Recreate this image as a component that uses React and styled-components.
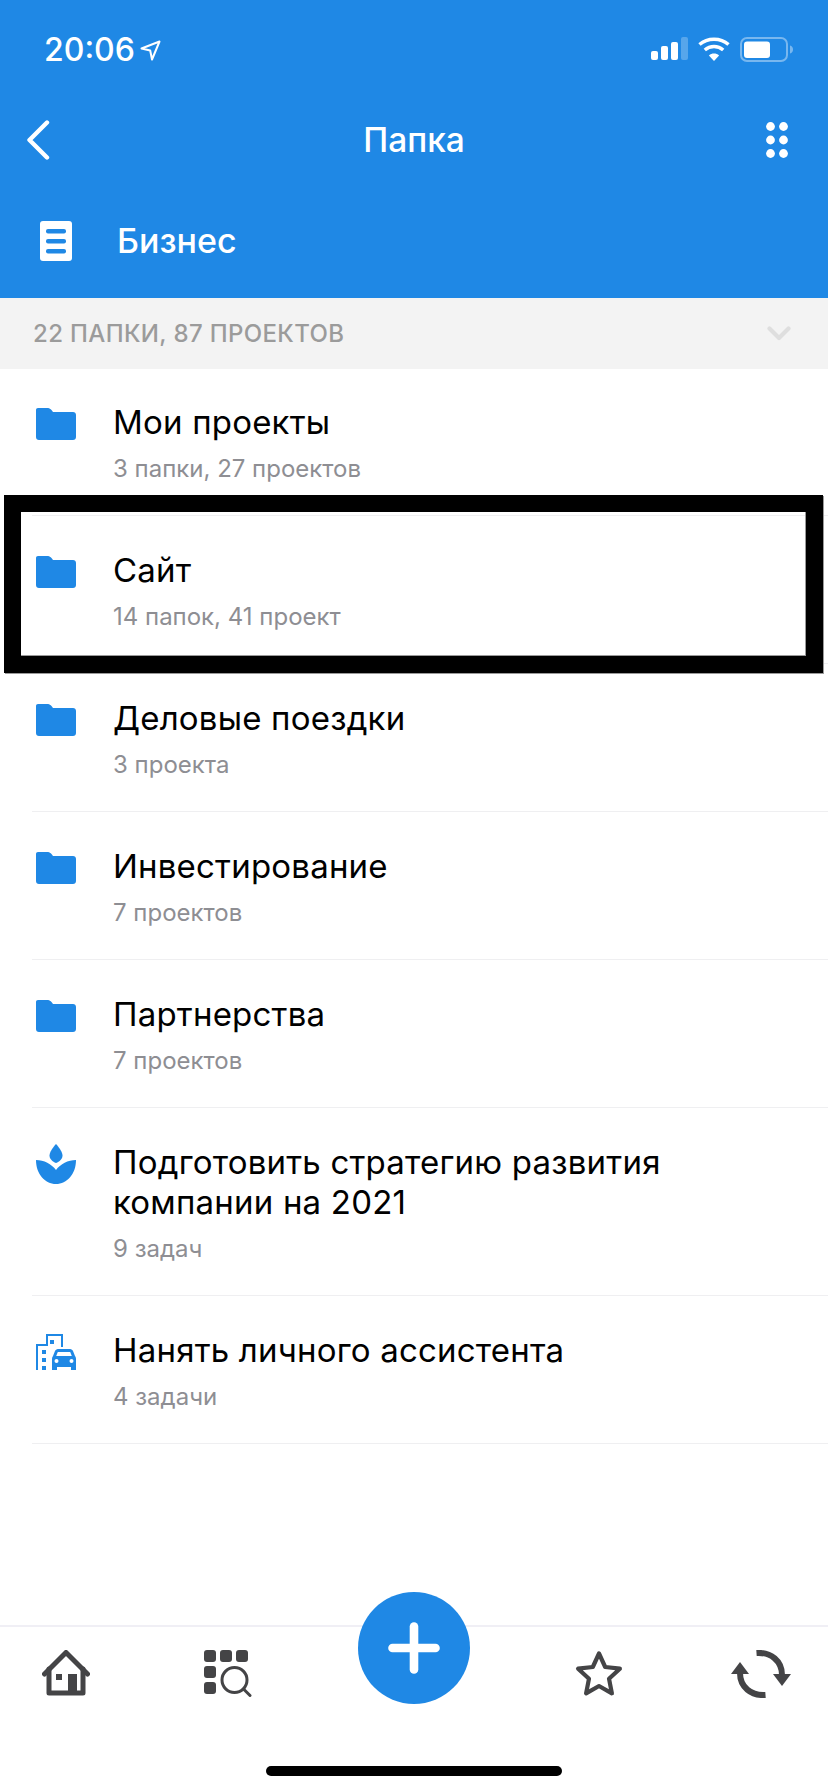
import React from 'react';
import styled, { createGlobalStyle } from 'styled-components';

const BLUE = '#1f88e5';
const DARK = '#444446';

const GlobalStyle = createGlobalStyle`
  html, body {
    margin: 0;
    padding: 0;
    background: #fff;
  }
  * {
    box-sizing: border-box;
  }
`;

const Page = styled.div`
  position: relative;
  display: flex;
  flex-direction: column;
  width: 828px;
  height: 1792px;
  overflow: hidden;
  background: #fff;
  font-family: Inter, 'Liberation Sans', sans-serif;
`;

const Header = styled.header`
  background: ${BLUE};
  color: #fff;
  height: 298px;
`;

const StatusBar = styled.div`
  display: flex;
  justify-content: space-between;
  height: 97px;
  padding: 34px 34px 0 44px;
`;

const TimeGroup = styled.div`
  display: flex;
  align-items: center;
  gap: 5px;
  height: 32px;
`;

const Time = styled.span`
  font-size: 32px;
  font-weight: 500;
  line-height: 32px;
`;

const StatusIcons = styled.div`
  display: flex;
  align-items: flex-start;
  gap: 10px;
  padding-top: 3px;
`;

const NavBar = styled.div`
  display: grid;
  grid-template-columns: 1fr auto 1fr;
  align-items: center;
  height: 86px;
  padding: 0 40px;
`;

const NavLeft = styled.div`
  display: flex;
  margin-left: -14px;
`;

const NavTitle = styled.h1`
  margin: 0;
  font-size: 33.5px;
  font-weight: 500;
  line-height: 40px;
`;

const NavRight = styled.div`
  display: flex;
  justify-content: flex-end;
`;

const FolderBar = styled.div`
  display: flex;
  align-items: center;
  gap: 45px;
  height: 115px;
  padding-left: 40px;
`;

const FolderName = styled.span`
  font-size: 34px;
  font-weight: 500;
  line-height: 40px;
`;

const SectionBar = styled.div`
  display: flex;
  align-items: center;
  justify-content: space-between;
  height: 71px;
  padding: 0 37px 0 33px;
  background: #f3f3f3;
`;

const SectionTitle = styled.span`
  font-size: 24px;
  font-weight: 500;
  letter-spacing: 0.36px;
  color: #9b9b9b;
`;

const List = styled.div`
  position: relative;
  flex: 1;
  margin-top: -1px;
`;

const Row = styled.div`
  display: flex;
  gap: 37px;
  margin-left: 32px;
  padding: 34px 30px 31px 4px;
  border-bottom: 1px solid #efeff1;
`;

const RowIcon = styled.div`
  flex: none;
  width: 40px;
  height: 40px;
  margin-top: ${(p) => p.$top || 0}px;
`;

const RowText = styled.div`
  display: flex;
  flex-direction: column;
  gap: 12px;
`;

const RowTitle = styled.div`
  font-size: 33px;
  font-weight: 400;
  line-height: 40px;
  letter-spacing: 0.2px;
  color: #000;
`;

const RowSub = styled.div`
  font-size: 24px;
  line-height: 30px;
  color: #8e8e93;
`;

const Highlight = styled.div`
  position: absolute;
  top: 127px;
  left: 4px;
  width: 819px;
  height: 178px;
  border: 17px solid #000;
  box-shadow: 1px 1px 0 #9a9a9a, inset -1px -1px 0 #9a9a9a;
  pointer-events: none;
`;

const TabBar = styled.nav`
  display: flex;
  flex-direction: column;
  align-items: center;
  height: 167px;
  border-top: 2px solid #f0eff5;
`;

const Tabs = styled.div`
  display: grid;
  grid-template-columns: 132px 192px 180px 190px 134px;
  width: 100%;
  height: 139px;
  padding-top: 23px;
`;

const Tab = styled.div`
  display: flex;
  justify-content: center;
  align-items: flex-start;
`;

const Fab = styled.button`
  flex: none;
  display: flex;
  align-items: center;
  justify-content: center;
  width: 112px;
  height: 112px;
  margin-top: -58px;
  padding: 0;
  border: 0;
  border-radius: 50%;
  background: ${BLUE};
`;

const HomeBar = styled.div`
  width: 296px;
  height: 10px;
  border-radius: 5px;
  background: #000;
`;

const Signal = () => (
  <svg width="37" height="24" viewBox="0 0 37 24" fill="#fff">
    <rect x="0" y="14" width="7" height="9" rx="2" />
    <rect x="10" y="9" width="7" height="14" rx="2" />
    <rect x="20" y="5" width="7" height="18" rx="2" />
    <rect x="30" y="0" width="7" height="23" rx="2" opacity="0.25" />
  </svg>
);

const Wifi = () => (
  <svg width="32" height="24" viewBox="0 0 32 24" fill="none" stroke="#fff" strokeWidth="3.4">
    <path d="M1.5 7.6C9.5 0.4 22.5 0.4 30.5 7.6" />
    <path d="M6.8 13C12 8.4 20 8.4 25.2 13" />
    <path d="M16 24L10.9 18.4C13.8 16 18.2 16 21.1 18.4Z" fill="#fff" stroke="none" />
  </svg>
);

const Battery = () => (
  <svg width="54" height="26" viewBox="0 0 54 26">
    <rect x="1" y="1" width="46" height="23" rx="6" fill="none" stroke="#fff" strokeOpacity="0.4" strokeWidth="2" />
    <rect x="4" y="4.5" width="26" height="16.5" rx="3" fill="#fff" />
    <path d="M50 8.5C52 9 53 10.5 53 12.5C53 14.5 52 16 50 16.5Z" fill="#fff" fillOpacity="0.4" />
  </svg>
);

const LocationArrow = () => (
  <svg width="21" height="21" viewBox="0 0 21 21" fill="none" stroke="#fff" strokeWidth="2" strokeLinejoin="round">
    <path d="M1.5 8.5L19.5 1.5L12 19.5L10.2 10.5Z" />
  </svg>
);

const BackIcon = () => (
  <svg width="24" height="40" viewBox="0 0 24 40" fill="none" stroke="#fff" strokeWidth="4.4" strokeLinecap="round" strokeLinejoin="round">
    <path d="M21 2.5L3.5 20L21 37.5" />
  </svg>
);

const DotsIcon = () => (
  <svg width="22" height="36" viewBox="0 0 22 36" fill="#fff">
    {[4.5, 18, 31.5].map((y) => (
      <g key={y}>
        <circle cx="4.5" cy={y} r="4.4" />
        <circle cx="17.5" cy={y} r="4.4" />
      </g>
    ))}
  </svg>
);

const DocIcon = () => (
  <svg width="32" height="40" viewBox="0 0 32 40">
    <rect width="32" height="40" rx="3" fill="#fff" />
    <rect x="6" y="8" width="20" height="4.6" rx="2" fill={BLUE} />
    <rect x="6" y="18" width="20" height="4.6" rx="2" fill={BLUE} />
    <rect x="6" y="28" width="20" height="4.6" rx="2" fill={BLUE} />
  </svg>
);

const ChevronDown = () => (
  <svg width="24" height="15" viewBox="0 0 24 15" fill="none" stroke="#dedede" strokeWidth="4.2" strokeLinecap="round" strokeLinejoin="round">
    <path d="M2.5 2.5L12 12L21.5 2.5" />
  </svg>
);

const FolderIcon = () => (
  <svg width="40" height="32" viewBox="0 0 40 32" fill={BLUE}>
    <path d="M2 0H12C13.5 0 14.5 1 15.5 2L17 4H37C38.8 4 40 5.2 40 7V29C40 30.8 38.8 32 37 32H3C1.2 32 0 30.8 0 29V2C0 0.8 0.8 0 2 0Z" />
  </svg>
);

const LotusIcon = () => (
  <svg width="40" height="40" viewBox="0 0 40 40" fill={BLUE}>
    <path d="M20 0C23 3.5 26.5 8 26.5 11.5C26.5 15 23.5 17.5 20 19C16.5 17.5 13.5 15 13.5 11.5C13.5 8 17 3.5 20 0Z" />
    <path d="M0 16C8 16 15.5 20 20 26C24.5 20 32 16 40 16C40 30 31 40 20 40C9 40 0 30 0 16Z" />
  </svg>
);

const CityCarIcon = () => (
  <svg width="40" height="36" viewBox="0 0 40 36" fill="none">
    <path d="M1 36V11H11V1H26V13" stroke={BLUE} strokeWidth="2" />
    <path
      fill={BLUE}
      fillRule="evenodd"
      d="M22 15H34C35.5 15 36.5 16 37 17L39 22C39.8 23 40 24 40 25V36H35V33H21V36H16V25C16 24 16.2 23 17 22L19 17C19.5 16 20.5 15 22 15ZM21.8 18L20.2 22H35.8L34.2 18Z"
    />
    <circle cx="20.5" cy="27" r="2" fill="#fff" />
    <circle cx="35.5" cy="27" r="2" fill="#fff" />
    <rect x="14" y="6" width="4" height="4" fill={BLUE} />
    <rect x="6" y="16" width="4" height="4" fill={BLUE} />
    <rect x="6" y="24" width="4" height="4" fill={BLUE} />
    <rect x="6" y="32" width="4" height="4" fill={BLUE} />
  </svg>
);

const HomeIcon = () => (
  <svg width="48" height="46" viewBox="0 0 48 46" fill="none" stroke={DARK} strokeWidth="5" strokeLinecap="round" strokeLinejoin="round">
    <path d="M2.5 24L24 2.5L45.5 24" />
    <path d="M7 19V43H41V19" />
    <rect x="14" y="24" width="6" height="6" fill={DARK} stroke="none" />
    <rect x="26" y="24" width="9" height="20" fill={DARK} stroke="none" />
  </svg>
);

const CatalogSearchIcon = () => (
  <svg width="48" height="48" viewBox="0 0 48 48" fill="none">
    <g fill={DARK}>
      <rect x="0" y="0" width="12" height="12" rx="3" />
      <rect x="16" y="0" width="12" height="12" rx="3" />
      <rect x="32" y="0" width="12" height="12" rx="3" />
      <rect x="0" y="16" width="12" height="12" rx="3" />
      <rect x="0" y="32" width="12" height="12" rx="3" />
    </g>
    <circle cx="30.5" cy="30" r="12.5" stroke={DARK} strokeWidth="3" />
    <path d="M39.5 39L46 45.5" stroke={DARK} strokeWidth="3" strokeLinecap="round" />
  </svg>
);

const StarIcon = () => (
  <svg width="48" height="48" viewBox="0 0 48 48" fill="none" stroke={DARK} strokeWidth="4.2" strokeLinejoin="round">
    <path d="M24 3.5L30.2 17L44.9 18.7L34 28.7L36.9 43.3L24 36L11.1 43.3L14 28.7L3.1 18.7L17.8 17Z" />
  </svg>
);

const SyncIcon = () => (
  <svg width="60" height="48" viewBox="0 0 60 48" fill="none">
    <path d="M25.5 3C40 2 51 11 51 25" stroke={DARK} strokeWidth="6" />
    <path d="M9 23C9 37 20 46 34.5 45" stroke={DARK} strokeWidth="6" />
    <path d="M42 24H60L51 36Z" fill={DARK} />
    <path d="M0 24H18L9 12Z" fill={DARK} />
  </svg>
);

const PlusIcon = () => (
  <svg width="52" height="52" viewBox="0 0 52 52" stroke="#fff" strokeWidth="8.6" strokeLinecap="round">
    <path d="M4.5 26H47.5" />
    <path d="M26 4.5V47.5" />
  </svg>
);

const items = [
  { id: 1, icon: <FolderIcon />, top: 6, title: 'Мои проекты', sub: '3 папки, 27 проектов' },
  { id: 2, icon: <FolderIcon />, top: 6, title: 'Сайт', sub: '14 папок, 41 проект' },
  { id: 3, icon: <FolderIcon />, top: 6, title: 'Деловые поездки', sub: '3 проекта' },
  { id: 4, icon: <FolderIcon />, top: 6, title: 'Инвестирование', sub: '7 проектов' },
  { id: 5, icon: <FolderIcon />, top: 6, title: 'Партнерства', sub: '7 проектов' },
  {
    id: 6,
    icon: <LotusIcon />,
    top: 2,
    title: (
      <>
        Подготовить стратегию развития
        <br />
        компании на 2021
      </>
    ),
    sub: '9 задач',
  },
  { id: 7, icon: <CityCarIcon />, top: 4, title: 'Нанять личного ассистента', sub: '4 задачи' },
];

const App = () => {
  return (
    <Page>
      <GlobalStyle />
      <Header>
        <StatusBar>
          <TimeGroup>
            <Time>20:06</Time>
            <LocationArrow />
          </TimeGroup>
          <StatusIcons>
            <Signal />
            <Wifi />
            <Battery />
          </StatusIcons>
        </StatusBar>
        <NavBar>
          <NavLeft>
            <BackIcon />
          </NavLeft>
          <NavTitle>Папка</NavTitle>
          <NavRight>
            <DotsIcon />
          </NavRight>
        </NavBar>
        <FolderBar>
          <DocIcon />
          <FolderName>Бизнес</FolderName>
        </FolderBar>
      </Header>
      <SectionBar>
        <SectionTitle>22 ПАПКИ, 87 ПРОЕКТОВ</SectionTitle>
        <ChevronDown />
      </SectionBar>
      <List>
        {items.map((item) => (
          <Row key={item.id}>
            <RowIcon $top={item.top}>{item.icon}</RowIcon>
            <RowText>
              <RowTitle>{item.title}</RowTitle>
              <RowSub>{item.sub}</RowSub>
            </RowText>
          </Row>
        ))}
        <Highlight />
      </List>
      <TabBar>
        <Tabs>
          <Tab><HomeIcon /></Tab>
          <Tab><CatalogSearchIcon /></Tab>
          <Tab><Fab><PlusIcon /></Fab></Tab>
          <Tab><StarIcon /></Tab>
          <Tab><SyncIcon /></Tab>
        </Tabs>
        <HomeBar />
      </TabBar>
    </Page>
  );
};

export default App;
